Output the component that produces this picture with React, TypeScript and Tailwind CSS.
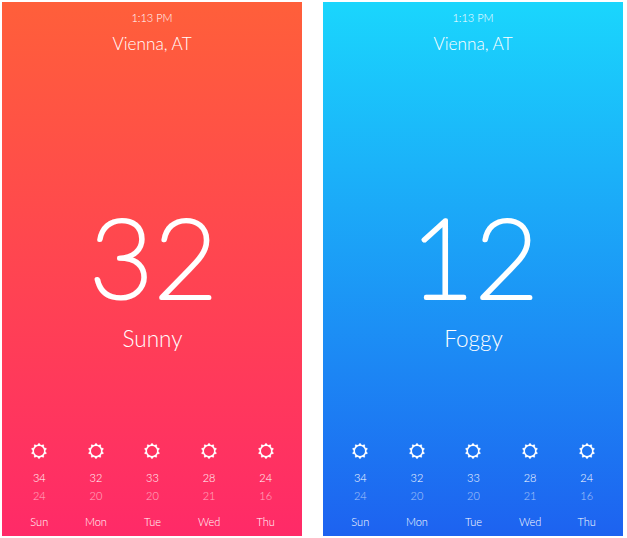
const days = [
  { day: 'Sun', high: 34, low: 24 },
  { day: 'Mon', high: 32, low: 20 },
  { day: 'Tue', high: 33, low: 20 },
  { day: 'Wed', high: 28, low: 21 },
  { day: 'Thu', high: 24, low: 16 },
];

const rays = [0, 36, 72, 108, 144, 180, 216, 252, 288, 324];

function SunIcon() {
  return (
    <svg className="size-4" viewBox="0 0 16 16" fill="none" stroke="white">
      <circle cx="8" cy="8" r="5.7" strokeWidth="1.4" />
      {rays.map((a) => (
        <path key={a} d="M6.4 2.3 L7.6 0.2 L8.4 0.2 L9.6 2.3 Z" fill="white" strokeWidth="0.2" transform={`rotate(${a} 8 8)`} />
      ))}
    </svg>
  );
}

function WeatherCard({ temp, condition, tone }: { temp: string; condition: string; tone: string }) {
  return (
    <section className={`flex h-[534px] w-[300px] flex-col items-center text-white ${tone}`}>
      <div className="mt-2 text-[11px] leading-[15px] font-light">1:13 PM</div>
      <div className="mt-[7px] text-[17.2px] leading-[23px] font-light">Vienna, AT</div>
      <svg
        className="mt-[127px] h-[140px] w-[300px] fill-white stroke-white text-[109.5px] font-extralight tracking-[1px] [stroke-linejoin:round] [stroke-linecap:round]"
        viewBox="0 0 300 140"
        strokeWidth="4.2"
      >
        <text x="152" y="115.5" textAnchor="middle">{temp}</text>
      </svg>
      <div className="mt-[2px] ml-[1px] text-[22.5px] leading-[29px] font-light">{condition}</div>
      <div className="mt-auto mb-[7px] ml-[1px] grid w-[283px] grid-cols-5 text-center text-[11px] leading-[15px] font-light">
        {days.map((d) => (
          <div key={d.day} className="flex flex-col items-center">
            <SunIcon />
            <span className="mt-[11px]">{d.high}</span>
            <span className="mt-[3px] opacity-60">{d.low}</span>
            <span className="mt-[11px]">{d.day}</span>
          </div>
        ))}
      </div>
    </section>
  );
}

export default function App() {
  return (
    <main className="flex h-[538px] w-[627px] gap-[21px] bg-white pt-[2px] pl-[2px] font-[Lato,sans-serif]">
      <WeatherCard temp="32" condition="Sunny" tone="bg-linear-to-b/srgb from-[#ff5f3a] to-[#ff2a68]" />
      <WeatherCard temp="12" condition="Foggy" tone="bg-linear-to-b/srgb from-[#1ad6fd] to-[#1d62f0]" />
    </main>
  );
}
